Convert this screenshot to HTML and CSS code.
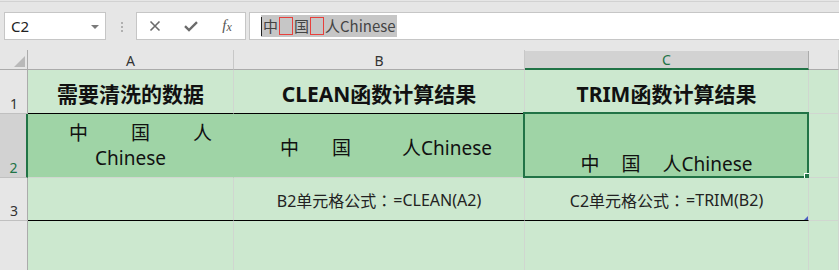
FILE: index.html
```
<!DOCTYPE html>
<html lang="zh-CN">
<head>
    <meta charset="UTF-8">
    <title>CLEAN / TRIM</title>
    <link rel="stylesheet" href="styles.css">
</head>
<body>
    <div class="toolbar">
        <div class="namebox">
            <span>C2</span>
            <span class="caret"></span>
        </div>
        <div class="grip"><i></i><i></i><i></i></div>
        <div class="fxbtns">
            <span class="btn">
                <svg width="12" height="12" viewBox="0 0 12 12">
                    <path d="M1.5 1.5 L10.5 10.5 M10.5 1.5 L1.5 10.5" stroke="#6b6b6b" stroke-width="1.6" fill="none"/>
                </svg>
            </span>
            <span class="btn">
                <svg width="14" height="11" viewBox="0 0 14 11">
                    <path d="M1 5.2 L5 9 L13 1.2" stroke="#6b6b6b" stroke-width="2.4" fill="none"/>
                </svg>
            </span>
            <span class="btn fx">f<span class="x">x</span></span>
        </div>
        <div class="formula">
            <span class="sel"><span class="cursor"></span>中<span class="nl"></span>国<span class="nl"></span>人Chinese</span>
        </div>
    </div>

    <div class="sheet">
        <!-- header row -->
        <div class="corner"><span class="tri"></span></div>
        <div class="ch">A</div>
        <div class="ch">B</div>
        <div class="ch on">C</div>
        <div class="ch"></div>

        <!-- row 1 -->
        <div class="rh">1</div>
        <div class="c hd bk">需要清洗的数据</div>
        <div class="c hd bk">CLEAN函数计算结果</div>
        <div class="c hd bk">TRIM函数计算结果</div>
        <div class="c"></div>

        <!-- row 2 -->
        <div class="rh on">2</div>
        <div class="c dark wrap">
            <div class="line1"><span>中</span><span class="g43"></span><span>国</span><span class="g43"></span><span>人</span></div>
            <div>Chinese</div>
        </div>
        <div class="c dark big">中<span class="g33"></span>国<span class="g51"></span>人Chinese</div>
        <div class="c dark big bottom active">中<span class="g22"></span>国<span class="g22"></span>人Chinese</div>
        <div class="c"></div>

        <!-- row 3 -->
        <div class="rh">3</div>
        <div class="c bk"></div>
        <div class="c bk small">B2单元格公式<span class="colon">：</span>=CLEAN(A2)</div>
        <div class="c bk small mark">C2单元格公式<span class="colon">：</span>=TRIM(B2)</div>
        <div class="c"></div>

        <!-- row 4 -->
        <div class="rh"></div>
        <div class="c"></div>
        <div class="c"></div>
        <div class="c"></div>
        <div class="c"></div>
    </div>
</body>
</html>
```

FILE: styles.css
```
* {
    margin: 0;
    padding: 0;
    box-sizing: border-box;
}

body {
    background: #e6e6e6;
    font-family: "Noto Sans", "Noto Sans CJK SC", sans-serif;
    color: #222;
    width: 839px;
    height: 270px;
    overflow: hidden;
}

/* formula bar */
.toolbar {
    display: flex;
    align-items: flex-start;
    margin-top: 1px;
    border-top: 1px solid #d2d2d2;
    padding: 10px 0 9px 4px;
    height: 49px;
}

.namebox {
    width: 102px;
    height: 28px;
    background: #fff;
    border: 1px solid #c6c6c6;
    display: flex;
    align-items: center;
    justify-content: space-between;
    padding: 0 6px 0 6px;
    font-size: 15px;
    color: #222;
}

.caret {
    width: 0;
    height: 0;
    border-left: 4px solid transparent;
    border-right: 4px solid transparent;
    border-top: 4px solid #7a7a7a;
    margin-top: 1px;
}

.grip {
    display: flex;
    flex-direction: column;
    gap: 2px;
    margin: 10px 0 0 15px;
}

.grip i {
    display: block;
    width: 2px;
    height: 2px;
    background: #b0b0b0;
}

.fxbtns {
    display: flex;
    margin-left: 13px;
    width: 110px;
    height: 28px;
    background: #fff;
    border: 1px solid #c6c6c6;
}

.btn {
    width: 36px;
    display: flex;
    align-items: center;
    justify-content: center;
}

.fx {
    font-family: "Liberation Serif", serif;
    font-style: italic;
    font-size: 15px;
    color: #555;
    padding-bottom: 1px;
}

.fx .x {
    font-size: 12px;
    margin-top: 4px;
}

.formula {
    flex: 1;
    height: 28px;
    margin-left: 3px;
    background: #fff;
    border: 1px solid #c6c6c6;
    border-right: none;
    padding: 2px 0 0 11px;
    font-family: "Noto Sans CJK SC", sans-serif;
    font-size: 15px;
    color: #444;
}

.sel {
    display: inline-flex;
    align-items: center;
    height: 22px;
    background: #c6c6c6;
    line-height: 22px;
    padding-right: 1px;
}

.cursor {
    width: 1px;
    height: 19px;
    background: #222;
    margin-right: 1px;
}

.nl {
    display: inline-block;
    width: 14px;
    height: 18px;
    border: 1px solid #e8403c;
    margin: 0 1px;
}

/* sheet */
.sheet {
    display: grid;
    grid-template-columns: 28px 206px 291px 284px 1fr;
    grid-template-rows: 20px 44px 64px 43px 1fr;
    height: 221px;
}

.corner {
    border-right: 1px solid #ababab;
    border-bottom: 1px solid #ababab;
    display: flex;
    align-items: flex-end;
    justify-content: flex-end;
    padding: 0 2px 2px 0;
}

.tri {
    width: 0;
    height: 0;
    border-left: 11px solid transparent;
    border-bottom: 11px solid #b9b9b9;
}

.ch {
    border-right: 1px solid #c8c8c8;
    border-bottom: 1px solid #ababab;
    font-size: 14px;
    color: #333;
    text-align: center;
    line-height: 20px;
    padding-top: 1px;
}

.ch.on {
    background: #d2d2d2;
    color: #217346;
    border-right-color: #ababab;
    border-bottom: 2px solid #217346;
    margin-top: 1px;
    line-height: 16px;
}

.rh {
    border-right: 1px solid #ababab;
    border-bottom: 1px solid #c0c0c0;
    font-size: 14px;
    color: #333;
    display: flex;
    align-items: flex-end;
    justify-content: center;
    line-height: 18px;
    padding-left: 1px;
}

.rh.on {
    background: #d2d2d2;
    color: #217346;
    border-right: 2px solid #217346;
}

.c {
    background: #cce8cf;
    border-right: 1px solid #d0d6d0;
    border-bottom: 1px solid #d0d6d0;
    display: flex;
    align-items: center;
    justify-content: center;
    color: #111;
    white-space: nowrap;
    position: relative;
}

.c.bk {
    border-bottom-color: #000;
}

.hd {
    font-size: 21px;
    font-weight: bold;
    padding-top: 3px;
}

.dark {
    background: #9fd4a6;
    border-right-color: #9fd4a6;
    font-size: 19px;
}

.wrap {
    flex-direction: column;
    line-height: 25px;
    padding-top: 1px;
}

.line1 {
    display: flex;
    margin-left: 20px;
}

.big {
    padding: 2px 0 0 14px;
}

.bottom {
    align-items: flex-end;
    padding: 0 0 1px 0;
    line-height: 24px;
}

.g22, .g33, .g43, .g51 {
    display: inline-block;
}

.g22 { width: 22px; }
.g33 { width: 33px; }
.g43 { width: 43px; }
.g51 { width: 51px; }

.small {
    font-size: 16px;
    color: #222;
    padding-top: 2px;
}

.colon {
    font-family: "Noto Sans CJK TC", sans-serif;
    margin-right: 1px;
}

/* selected cell */
.active::before {
    content: "";
    position: absolute;
    top: -2px;
    left: -2px;
    right: -1px;
    bottom: -1px;
    border: 2px solid #217346;
}

.active::after {
    content: "";
    position: absolute;
    right: -3px;
    bottom: -3px;
    width: 6px;
    height: 6px;
    background: #217346;
    border-left: 1px solid #fff;
    border-top: 1px solid #fff;
}

.mark::after {
    content: "";
    position: absolute;
    right: 0;
    bottom: 0;
    width: 0;
    height: 0;
    border-left: 4px solid transparent;
    border-bottom: 4px solid #4a5fc1;
}
```
